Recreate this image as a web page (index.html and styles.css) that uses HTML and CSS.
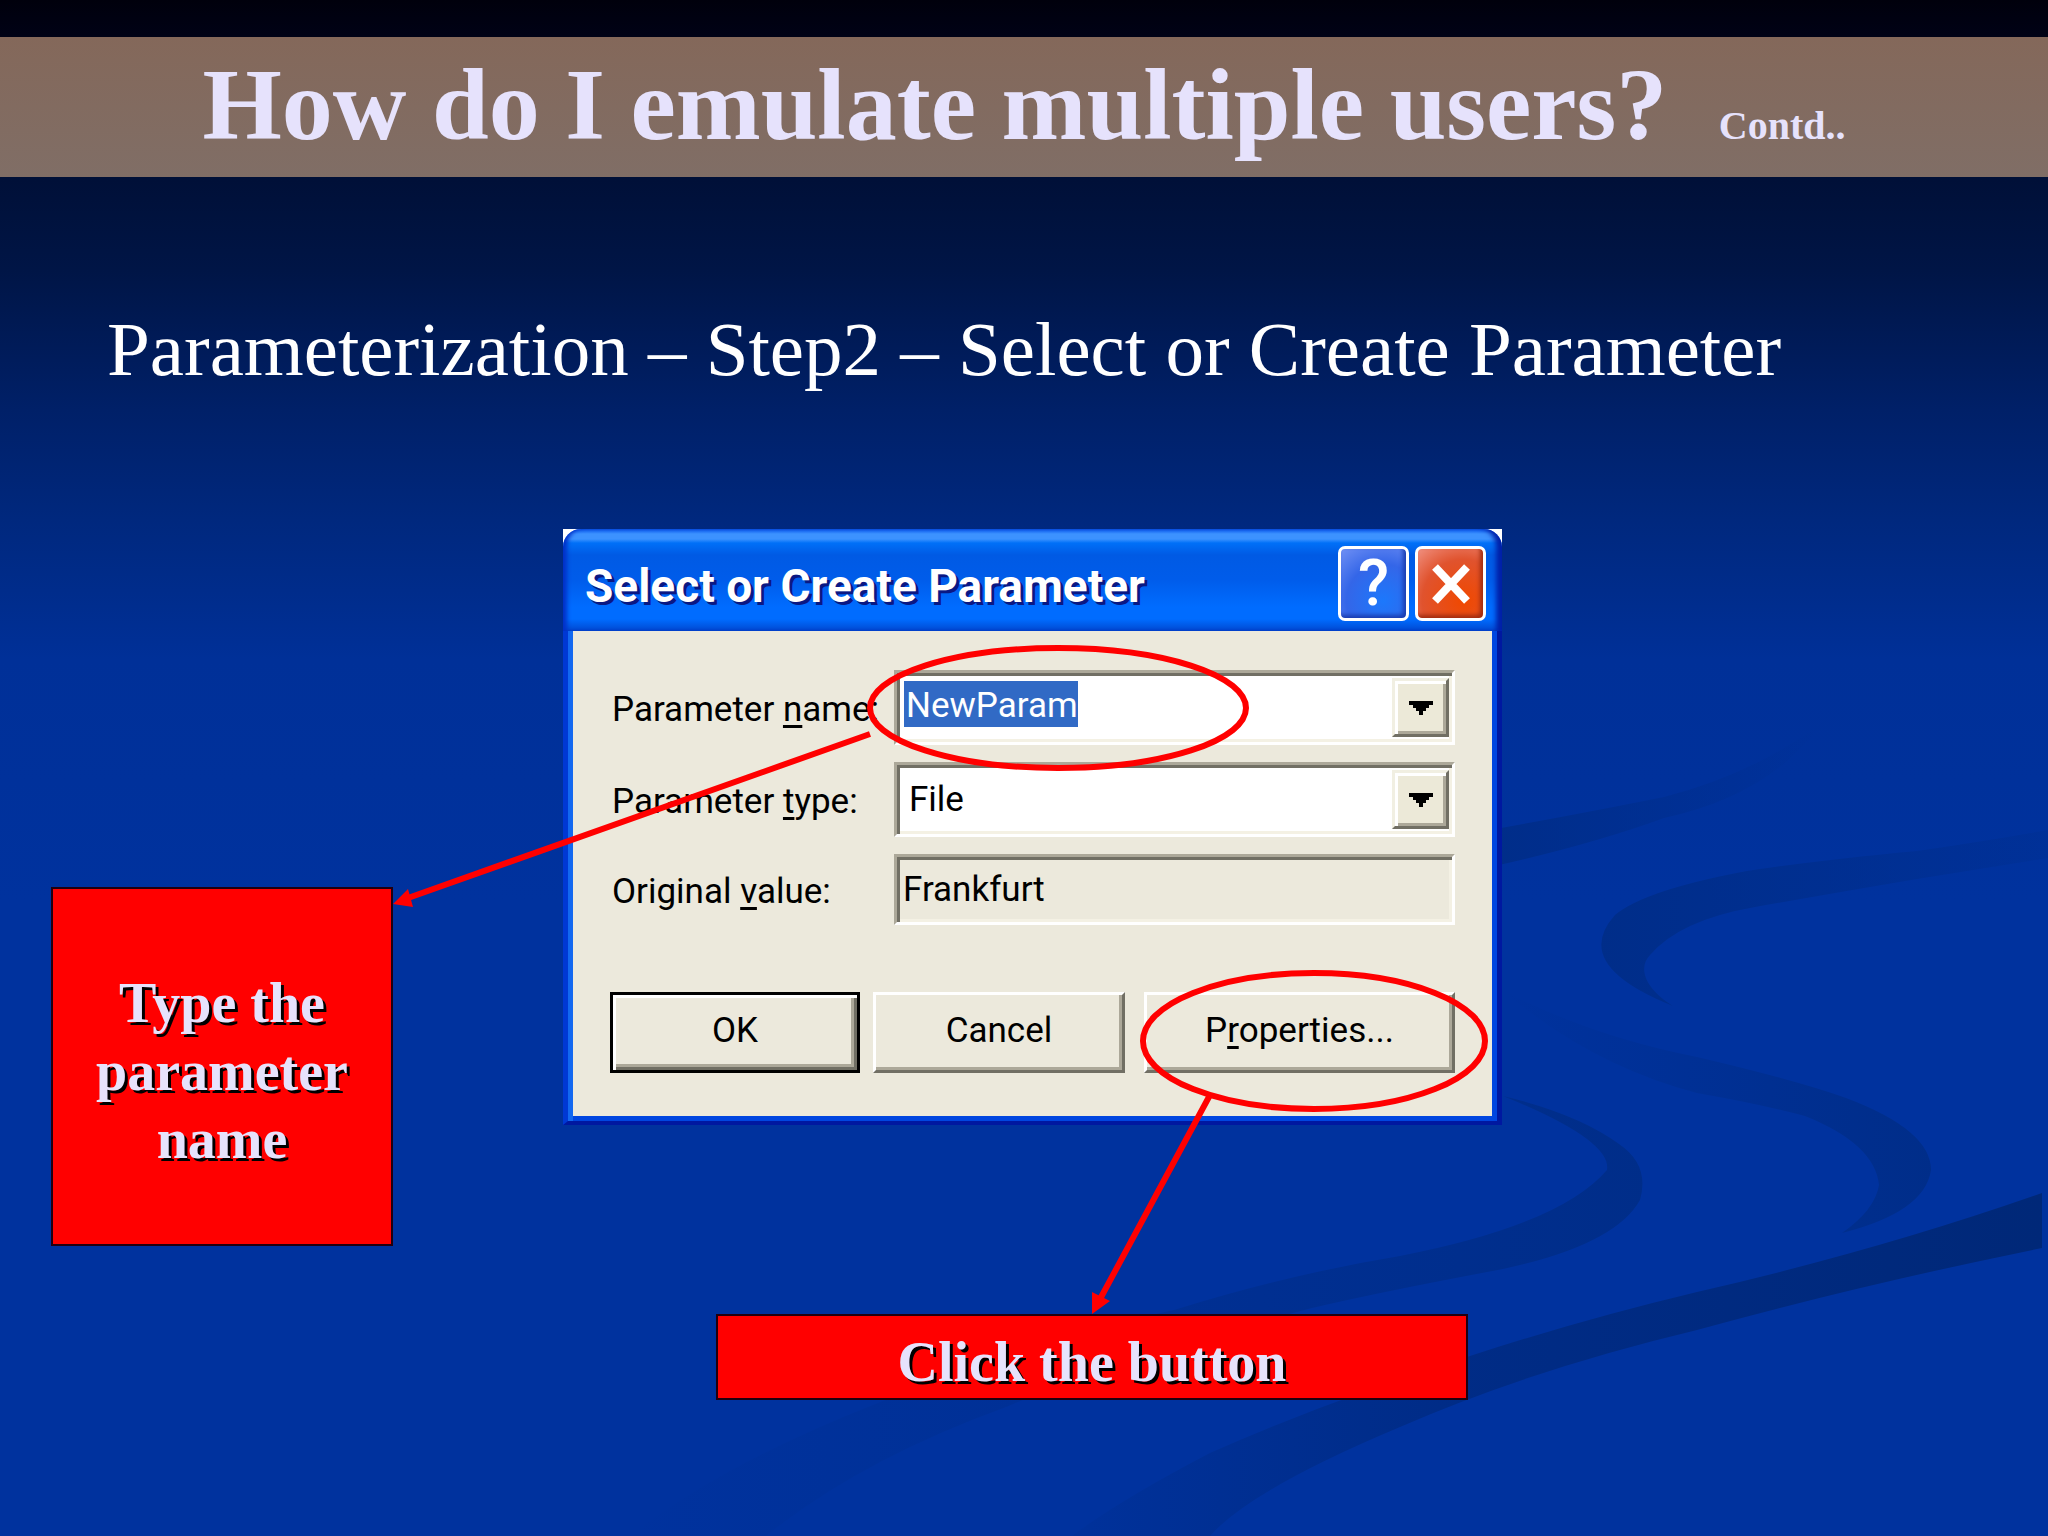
FILE: index.html
```html
<!DOCTYPE html>
<html lang="en">
<head>
    <meta charset="UTF-8">
    <meta name="viewport" content="width=device-width, initial-scale=1.0">
    <title>How do I emulate multiple users?</title>
    <link rel="stylesheet" href="styles.css">
</head>
<body>
    <main class="slide">
        <!-- Background swooshes -->
        <svg class="backdrop" viewBox="0 0 2048 1536" preserveAspectRatio="none" aria-hidden="true">
            <defs>
                <linearGradient id="fadeRight">
                    <stop offset="0" stop-color="#002c84" stop-opacity="0.8"/>
                    <stop offset="1" stop-color="#002c84" stop-opacity="0"/>
                </linearGradient>
                <linearGradient id="fadeEnd">
                    <stop offset="0" stop-color="#002c84" stop-opacity="0.8"/>
                    <stop offset="1" stop-color="#002c84" stop-opacity="0.2"/>
                </linearGradient>
                <linearGradient id="fadeLeft">
                    <stop offset="0" stop-color="#002c84" stop-opacity="0"/>
                    <stop offset="1" stop-color="#002c84" stop-opacity="0.8"/>
                </linearGradient>
                <linearGradient id="road">
                    <stop offset="0" stop-color="#002a80" stop-opacity="0.1"/>
                    <stop offset="0.4" stop-color="#002a80" stop-opacity="0.8"/>
                    <stop offset="1" stop-color="#002878"/>
                </linearGradient>
            </defs>
            <path fill="url(#fadeRight)" d="M1490 830Q1590 812 1664 797Q1750 775 1820 725Q1770 795 1664 818Q1590 845 1490 867Z"/>
            <path fill="url(#fadeEnd)" d="M2048 830Q1980 842 1917 851Q1820 860 1747 871Q1645 890 1615 915Q1570 965 1673 1006C1640 985 1640 965 1650 955Q1680 920 1755 907Q1840 892 1917 879L2048 858Z"/>
            <path fill="url(#fadeLeft)" d="M1502 990Q1590 1036 1697 1057Q1795 1080 1846 1098Q1931 1130 1931 1170Q1925 1212 1842 1233Q1875 1210 1879 1185Q1875 1144 1805 1116Q1760 1104 1697 1093Q1590 1065 1502 990Z"/>
            <path fill="url(#fadeLeft)" d="M1503 1096Q1578 1114 1619 1144Q1650 1165 1640 1200Q1615 1245 1503 1269Q1380 1292 1312 1308Q1130 1355 1006 1407Q860 1460 766 1536H630Q720 1465 878 1403Q1030 1340 1174 1310Q1290 1274 1400 1256Q1560 1225 1607 1170Q1612 1140 1503 1096Z"/>
            <path fill="url(#road)" d="M2042 1193Q1880 1250 1697 1292Q1580 1320 1470 1356Q1330 1400 1210 1453Q1120 1500 1072 1536H1210Q1250 1490 1400 1427Q1530 1370 1697 1330Q1860 1285 2042 1248Z"/>
        </svg>

        <header class="title-band">
            <h1 class="title">How do I emulate multiple users? <small class="title-note">Contd..</small></h1>
        </header>

        <h2 class="subtitle">Parameterization – Step2 – Select or Create Parameter</h2>

        <div class="stage">
            <p class="callout callout-name">Type the<br>parameter<br>name</p>

            <form class="dialog" aria-labelledby="dialog-title">
                <div class="titlebar">
                    <h3 class="dialog-title" id="dialog-title">Select or Create Parameter</h3>
                    <button type="button" class="caption-btn help">?</button>
                    <button type="button" class="caption-btn close" aria-label="Close">
                        <svg width="38" height="40" viewBox="0 0 38 40" aria-hidden="true">
                            <path d="M3 3L35 37M35 3L3 37" stroke="#fff" stroke-width="8"/>
                        </svg>
                    </button>
                </div>
                <div class="dialog-body">
                    <div class="fields">
                        <label for="param-name">Parameter <u>n</u>ame:</label>
                        <div class="field">
                            <input type="text" id="param-name" class="selected" value="NewParam">
                            <button type="button" class="drop" aria-label="Show parameters">
                                <svg width="24" height="14" viewBox="0 0 24 14" aria-hidden="true"><path d="M0 0H24V4H20V7H17V10H14V14H10V10H7V7H4V4H0Z"/></svg>
                            </button>
                        </div>

                        <label for="param-type">Parameter <u>t</u>ype:</label>
                        <div class="field">
                            <select id="param-type">
                                <option>File</option>
                            </select>
                            <span class="drop">
                                <svg width="24" height="14" viewBox="0 0 24 14" aria-hidden="true"><path d="M0 0H24V4H20V7H17V10H14V14H10V10H7V7H4V4H0Z"/></svg>
                            </span>
                        </div>

                        <label for="original">Original <u>v</u>alue:</label>
                        <div class="field readonly">
                            <input type="text" id="original" value="Frankfurt" readonly>
                        </div>
                    </div>
                    <div class="actions">
                        <button type="button" class="btn default">OK</button>
                        <button type="button" class="btn">Cancel</button>
                        <button type="button" class="btn props">P<u>r</u>operties...</button>
                    </div>
                </div>
            </form>

            <p class="callout callout-button">Click the button</p>
        </div>

        <!-- Red circles and arrows over the dialog -->
        <svg class="marks" viewBox="0 0 2048 1536" preserveAspectRatio="none" aria-hidden="true">
            <g fill="none" stroke="#f00" stroke-width="6">
                <ellipse cx="1058" cy="708" rx="188" ry="60"/>
                <ellipse cx="1314" cy="1041" rx="171" ry="68"/>
                <path d="M870 734L408 898M1210 1095L1099 1301"/>
            </g>
            <path fill="#f00" d="M393 904L408 889L413 907ZM1092 1314V1292L1110 1301Z"/>
        </svg>
    </main>
</body>
</html>
```
FILE: styles.css
```css
* {
    box-sizing: border-box;
}
body {
    margin: 0;
    background: #00319c;
    font-family: "Liberation Serif", serif;
}
h1, h2, h3, p {
    margin: 0;
}
.slide {
    position: relative;
    min-height: 100vh;
    padding-top: 37px;
    overflow: hidden;
    background: linear-gradient(#00000c 0, #000216 37px, #001038 180px, #001546 270px, #002068 410px, #00287e 520px, #003098 660px, #00329e 900px);
}
.backdrop, .marks {
    position: absolute;
    top: 0;
    left: 0;
    width: 100%;
    height: 100%;
    pointer-events: none;
}

/* Header */
.title-band {
    position: relative;
    height: 140px;
    background: linear-gradient(#84685a, #806e66);
    text-align: center;
}
.title {
    font-size: 102px;
    line-height: 136px;
    color: #e6e2fc;
}
.title-note {
    margin-left: 26px;
    font-size: 40px;
}
.subtitle {
    position: relative;
    margin: 128px 107px 0;
    font-size: 77px;
    font-weight: normal;
    line-height: 88px;
    color: #fff;
}

/* Callouts and dialog */
.stage {
    position: relative;
    display: grid;
    grid-template-columns: 342fr 170fr 939fr 495fr;
    row-gap: 68px;
    padding: 0 51px;
    margin-top: 136px;
}
.callout {
    border: 2px solid #200010;
    background: #f00;
    color: #e6e2fc;
    font-size: 56px;
    font-weight: bold;
    line-height: 68px;
    text-align: center;
    text-shadow: 3px 3px 0 #000;
}
.callout-name {
    grid-column: 1;
    height: 359px;
    margin-top: 358px;
    padding: 80px 12px 0;
}
.callout-button {
    grid-column: 3;
    justify-self: end;
    width: 752px;
    margin-right: 34px;
    padding: 12px 0 2px;
}
.dialog {
    grid-column: 3;
    align-self: start;
    background: #fff;
    font-family: Roboto, "Liberation Sans", sans-serif;
}
.titlebar {
    display: flex;
    align-items: center;
    gap: 6px;
    height: 102px;
    padding: 7px 16px 0 22px;
    border-radius: 18px 18px 0 0;
    background: linear-gradient(#0a5cf0 0, #3c92ff 5px, #3c92ff 10px, #0070f8 14px, #005ae4 26px, #005cea 50px, #006cff 78px, #006cff 90px, #0048d0 102px);
    box-shadow: inset 6px 0 4px -2px #0030c8, inset -8px 0 5px -2px #0020a8;
}
.dialog-title {
    flex: 1;
    padding-top: 4px;
    color: #fff;
    font-size: 46px;
    line-height: 60px;
    text-shadow: 3px 3px 0 #0a1883;
}
.caption-btn {
    display: flex;
    align-items: center;
    justify-content: center;
    width: 71px;
    height: 75px;
    padding: 0;
    border: 3px solid #fff;
    border-radius: 7px;
    color: #fff;
    font: 500 64px Roboto, "Liberation Sans", sans-serif;
}
.help {
    background: radial-gradient(circle at 65% 75%, #1c78fc, #3466e8 55%, #7090f4);
    box-shadow: inset -3px -3px 4px #1a3cb0;
}
.close {
    background: radial-gradient(circle at 70% 75%, #f04800, #e0532e 60%, #f09080);
    box-shadow: inset -3px -3px 4px #a02c10;
}
.dialog-body {
    padding: 39px 42px 48px;
    border: solid;
    border-width: 0 5px 4px;
    border-color: #0018a0 #0018a0 #0018a0 #0038d4;
    background: #ece9dc;
    box-shadow: inset 5px 0 0 #1268f0, inset -5px -5px 0 #0046e0;
    color: #000;
    font-size: 35px;
}
.fields {
    display: grid;
    grid-template-columns: 284px 1fr;
    row-gap: 17px;
    align-items: center;
}
.fields label {
    padding: 4px 0 0 2px;
    line-height: 50px;
    white-space: nowrap;
}
u {
    text-decoration-thickness: 3px;
    text-underline-offset: 4px;
}
.field {
    display: grid;
    align-items: center;
    height: 75px;
    padding: 3px;
    border: 3px solid;
    border-color: #aca899 #fff #fff #aca899;
    background: #fff;
    box-shadow: inset 3px 3px 0 #716f64, inset -3px -3px 0 #f4f1e4;
}
.field > * {
    grid-area: 1 / 1;
}
.field input, .field select {
    width: 100%;
    height: 46px;
    padding: 0 3px;
    border: 0;
    border-radius: 0;
    background: none;
    color: #000;
    font: inherit;
    line-height: 46px;
    appearance: none;
}
.field select {
    padding-left: 9px;
}
.field .selected {
    width: 174px;
    margin: 0 0 8px 4px;
    padding: 4px 0 0 2px;
    background: #316ac5;
    color: #fff;
}
.readonly {
    height: 71px;
    background: #ece9dc;
}
.drop {
    display: flex;
    align-items: center;
    justify-content: center;
    justify-self: end;
    width: 57px;
    height: 59px;
    padding: 0;
    border: 3px solid;
    border-color: #f1efe2 #716f64 #716f64 #f1efe2;
    background: #ece9d8;
    box-shadow: inset 3px 3px 0 #fff, inset -3px -3px 0 #aca899;
    pointer-events: none;
}
.actions {
    display: grid;
    grid-template-columns: 250fr 252fr 317fr;
    gap: 13px;
    margin-top: 67px;
}
.btn {
    height: 81px;
    padding: 0 0 4px;
    border: 3px solid;
    border-color: #fff #716f64 #716f64 #fff;
    background: #ece9dc;
    box-shadow: inset -3px -3px 0 #aca899;
    color: #000;
    font: inherit;
}
.default {
    border-color: #000;
    box-shadow: inset 3px 3px 0 #fff, inset -3px -3px 0 #716f64, inset -6px -6px 0 #aca899;
}
.props {
    margin-left: 6px;
}
```
